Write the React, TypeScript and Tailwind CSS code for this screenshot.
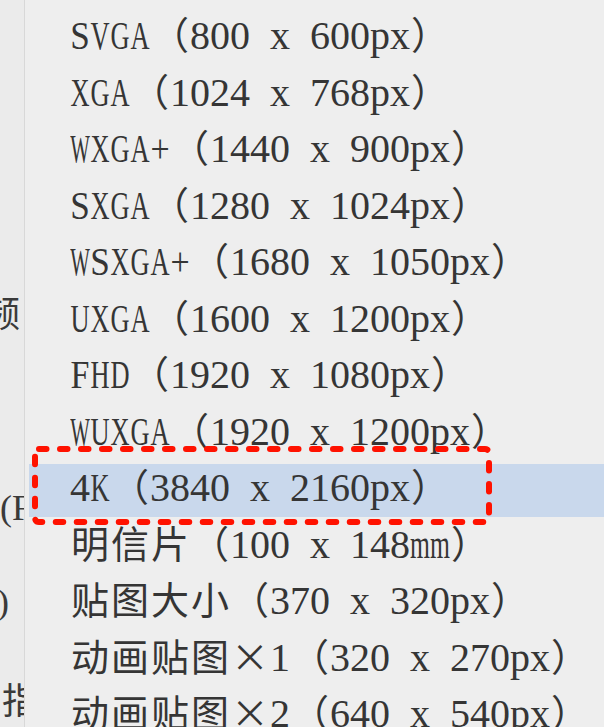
import React from "react";
import clsx from "clsx";

// SimSun-like grid: ascii glyphs take half a cell, everything else a full cell
const squeeze: Record<string, string> = {
  V: "scale-x-[0.66]",
  G: "scale-x-[0.66]",
  A: "scale-x-[0.66]",
  X: "scale-x-[0.66]",
  U: "scale-x-[0.66]",
  H: "scale-x-[0.66]",
  D: "scale-x-[0.66]",
  K: "scale-x-[0.66]",
  W: "scale-x-[0.52]",
  S: "scale-x-[0.88]",
  F: "scale-x-[0.85]",
  "+": "scale-x-[0.85]",
  m: "scale-x-[0.64]",
};

const sizes = [
  "SVGA（800 x 600px）",
  "XGA（1024 x 768px）",
  "WXGA+（1440 x 900px）",
  "SXGA（1280 x 1024px）",
  "WSXGA+（1680 x 1050px）",
  "UXGA（1600 x 1200px）",
  "FHD（1920 x 1080px）",
  "WUXGA（1920 x 1200px）",
  "4K（3840 x 2160px）",
  "明信片（100 x 148mm）",
  "贴图大小（370 x 320px）",
  "动画贴图×1（320 x 270px）",
  "动画贴图×2（640 x 540px）",
];

const Cell = ({ ch }: { ch: string }) => {
  if (ch.charCodeAt(0) < 128) {
    return (
      <span
        className={clsx(
          "inline-flex w-[20px] justify-center font-['Liberation_Serif',serif] text-[40px]",
          squeeze[ch]
        )}
      >
        {ch === " " ? "\u00a0" : ch}
      </span>
    );
  }
  return (
    <span className="inline-flex w-[40px] justify-center font-['Noto_Sans_CJK_SC',sans-serif] text-[38px]">
      {ch}
    </span>
  );
};

const Label = ({ text }: { text: string }) => (
  <span className="whitespace-nowrap leading-[40px]">
    {Array.from(text).map((ch, i) => (
      <Cell key={i} ch={ch} />
    ))}
  </span>
);

export default function App() {
  const selected = 8;

  return (
    <div className="flex h-[727px] w-[604px] overflow-hidden bg-[#eeeeee] text-[#353535]">
      {/* what peeks out from the dialog behind */}
      <div className="flex w-[25px] shrink-0 flex-col overflow-hidden border-r border-[#d8d8d8] bg-[#ebebeb] text-[#3a3a3a]">
        <div className="-ml-[16px] mt-[292px] h-[38px] whitespace-nowrap font-['Noto_Sans_CJK_SC',sans-serif] text-[36px] leading-[38px]">
          频
        </div>
        <div className="mt-[159px] h-[38px] whitespace-nowrap font-['Liberation_Serif',serif] text-[36px] leading-[38px]">
          (F
        </div>
        <div className="-ml-[3px] mt-[56px] h-[38px] whitespace-nowrap font-['Liberation_Serif',serif] text-[36px] leading-[38px]">
          )
        </div>
        <div className="ml-[2px] mt-[58px] h-[38px] whitespace-nowrap font-['Noto_Sans_CJK_SC',sans-serif] text-[36px] leading-[38px]">
          指
        </div>
      </div>

      <div className="flex min-w-0 flex-1 flex-col pl-[4px] pt-[10px]">
        {sizes.map((s, i) => (
          <div
            key={s}
            className={clsx(
              "relative flex h-[56.5px] shrink-0 items-center",
              i === selected && "bg-[#c9d8ec] [background-clip:content-box] py-[1.5px]"
            )}
          >
            <div className="pl-[41px]">
              <Label text={s} />
            </div>
            {i === selected && (
              <svg
                className="pointer-events-none absolute left-[3px] top-[-16px] overflow-visible"
                width="460"
                height="79"
                viewBox="0 0 460 79"
              >
                <rect
                  x="3"
                  y="3"
                  width="454"
                  height="73"
                  rx="4"
                  fill="none"
                  stroke="#ff1200"
                  strokeWidth="6"
                  strokeLinecap="round"
                  strokeDasharray="7.5 13.5"
                />
              </svg>
            )}
          </div>
        ))}
      </div>
    </div>
  );
}
